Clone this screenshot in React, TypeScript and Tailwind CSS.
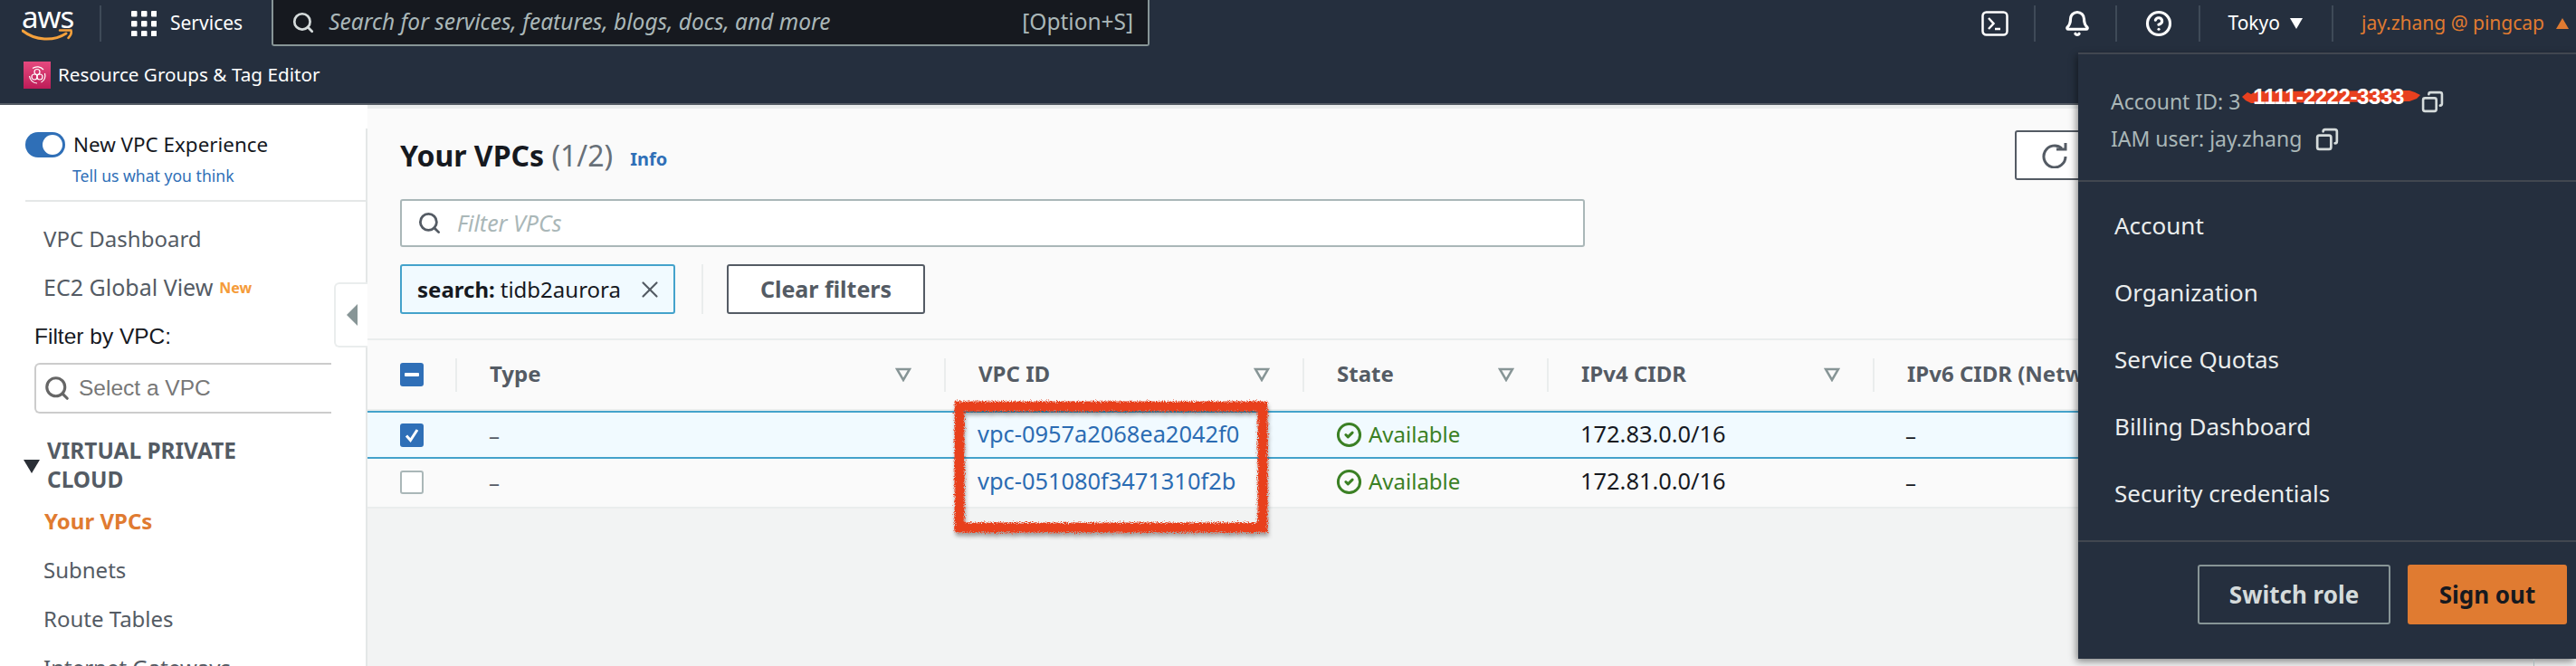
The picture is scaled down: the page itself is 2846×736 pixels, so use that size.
import { Bell, CircleCheck, CircleHelp, Copy, Search, X } from "lucide-react";

const columns = [
  { label: "Type", cell: "w-[540px]", caret: true },
  { label: "VPC ID", cell: "w-[396px]", caret: true },
  { label: "State", cell: "w-[270px]", caret: true },
  { label: "IPv4 CIDR", cell: "w-[360px]", caret: true },
  { label: "IPv6 CIDR (Network border group)", cell: "w-[400px]", caret: false },
];

const rows = [
  { id: "vpc-0957a2068ea2042f0", cidr: "172.83.0.0/16", selected: true },
  { id: "vpc-051080f3471310f2b", cidr: "172.81.0.0/16", selected: false },
];

const menuItems = ["Account", "Organization", "Service Quotas", "Billing Dashboard", "Security credentials"];

function NavSep() {
  return <div className="h-[40px] w-[2px] bg-[#3f4a58]" />;
}

function AwsLogo() {
  return (
    <div className="flex w-[56px] flex-col">
      <span className="h-[28px] text-[33px] leading-[28px] tracking-[-1px] text-white">aws</span>
      <svg width="57" height="14" viewBox="0 0 57 14" fill="none" className="-mt-[1px]">
        <path d="M1 2c14 11 34 12 48 3" stroke="#f5a13c" strokeWidth="3" strokeLinecap="round" />
        <path d="M42 1.5h12.5c.8 3-.8 6.500-3 8.500" stroke="#f5a13c" strokeWidth="2.500" strokeLinecap="round" />
      </svg>
    </div>
  );
}

function GridIcon() {
  return (
    <svg width="28" height="28" viewBox="0 0 28 28" fill="white">
      {[0, 11, 22].map((y) =>
        [0, 11, 22].map((x) => <rect key={`${x}-${y}`} x={x} y={y} width="6.500" height="6.500" rx="1" />)
      )}
    </svg>
  );
}

function TerminalIcon() {
  return (
    <svg width="30" height="28" viewBox="0 0 30 28" fill="none" stroke="white" strokeWidth="2.500">
      <rect x="1.500" y="1.500" width="27" height="25" rx="4" />
      <path d="M8 8l5.500 6L8 20M15 20h6" />
    </svg>
  );
}

function ResourceGroupsIcon() {
  return (
    <div className="flex h-[30px] w-[30px] items-center justify-center bg-gradient-to-t from-[#bd1a58] to-[#e5497f]">
      <svg width="22" height="22" viewBox="0 0 22 22" fill="none" stroke="white" strokeWidth="1.200">
        <circle cx="11" cy="7.500" r="3" />
        <circle cx="8" cy="13" r="3" />
        <circle cx="14" cy="13" r="3" />
        <path d="M6 3.500A9 9 0 0 1 18 5M19.500 9a9 9 0 0 1-4 10M11 20a9 9 0 0 1-8.500-8" />
      </svg>
    </div>
  );
}

function FilterCaret() {
  return (
    <svg width="18" height="16" viewBox="0 0 18 16" fill="none" stroke="#879596" strokeWidth="2.500" className="ml-auto mr-[36px]">
      <path d="M2 2h14L9 14z" />
    </svg>
  );
}

function Checkbox({ state }: { state: "mixed" | "checked" | "empty" }) {
  if (state === "empty") {
    return <div className="h-[26px] w-[26px] rounded-[3px] border-2 border-[#aab7b8] bg-white" />;
  }
  return (
    <div className="flex h-[26px] w-[26px] items-center justify-center rounded-[3px] bg-[#2f6fb7]">
      {state === "mixed" ? (
        <div className="h-[4px] w-[16px] rounded-[1px] bg-white" />
      ) : (
        <svg width="18" height="18" viewBox="0 0 18 18" fill="none" stroke="white" strokeWidth="3">
          <path d="M3 9.500l4.500 5L15 3" />
        </svg>
      )}
    </div>
  );
}

function Sidebar() {
  return (
    <aside className="relative w-[406px] shrink-0 bg-white pt-[26px]">
      <div className="h-full border-r-2 border-[#e4e7e7] pl-[28px]">
        <div className="flex h-[36px] items-center">
          <div className="flex h-[28px] w-[44px] items-center justify-end rounded-full bg-[#2f6fb7] pr-[3px]">
            <div className="h-[22px] w-[22px] rounded-full bg-white" />
          </div>
          <span className="ml-[9px] text-[22.4px] text-[#16191f]">New VPC Experience</span>
        </div>
        <div className="flex h-[32px] items-center pl-[52px] text-[17.6px] text-[#2f6fb7]">Tell us what you think</div>
        <div className="mt-[11px] h-[2px] bg-[#e4e7e7]" />
        <div className="pt-[14px] text-[24px] text-[#545b64]">
          <div className="flex h-[54px] items-center pl-[20px]">VPC Dashboard</div>
          <div className="flex h-[54px] items-center pl-[20px] text-[25px]">
            EC2 Global View
            <span className="ml-[7px] text-[16px] font-bold text-[#f59b39]">New</span>
          </div>
        </div>
        <div className="flex h-[54px] items-center pl-[10px] font-['Liberation_Sans',sans-serif] text-[24.5px] text-[#16191f]">
          Filter by VPC:
        </div>
        <div className="ml-[10px] mt-[2px] flex h-[56px] w-[328px] items-center rounded-l-[6px] border-2 border-r-0 border-[#cccccc] pl-[8px] font-['Liberation_Sans',sans-serif] text-[24.5px] text-[#777777]">
          <Search size={30} strokeWidth={2.500} className="text-[#666666]" />
          <span className="ml-[9px]">Select a VPC</span>
        </div>
        <div className="relative mt-[25px] pl-[24px] text-[24.4px] font-bold leading-[32px] text-[#545b64]">
          <svg width="18" height="15" viewBox="0 0 18 15" className="absolute -left-[2px] top-[26px]">
            <path d="M0 0h18L9 15z" fill="#2a2f36" />
          </svg>
          VIRTUAL PRIVATE
          <br />
          CLOUD
        </div>
        <div className="pt-[3px] text-[24px] text-[#545b64]">
          <div className="flex h-[54px] items-center pl-[21px] font-bold text-[#e07b31]">Your VPCs</div>
          <div className="flex h-[54px] items-center pl-[20px]">Subnets</div>
          <div className="flex h-[54px] items-center pl-[20px]">Route Tables</div>
          <div className="flex h-[54px] items-center pl-[20px]">Internet Gateways</div>
        </div>
      </div>
      {/* collapse handle sits over the sidebar edge */}
      <div className="absolute left-[369px] top-[196px] flex h-[72px] w-[37px] items-center justify-center rounded-l-[6px] border-2 border-r-0 border-[#eaeded] bg-white">
        <svg width="12" height="24" viewBox="0 0 12 24">
          <path d="M12 0v24L0 12z" fill="#879596" />
        </svg>
      </div>
    </aside>
  );
}

function VpcTable() {
  return (
    <div className="mt-[27px]">
      <div className="flex h-[80px] items-center border-y-2 border-[#eaeded] text-[24px] font-bold text-[#545b64]">
        <div className="flex h-[37px] w-[99px] items-center border-r-2 border-[#eaeded] pl-[36px]">
          <Checkbox state="mixed" />
        </div>
        {columns.map((col) => (
          <div
            key={col.label}
            className={`flex h-[37px] shrink-0 items-center whitespace-nowrap pl-[36px] ${col.cell} ${col.caret ? "border-r-2 border-[#eaeded]" : ""}`}
          >
            <span className="-mt-[3px]">{col.label}</span>
            {col.caret && <FilterCaret />}
          </div>
        ))}
      </div>
      {rows.map((row) => (
        <div
          key={row.id}
          className={`flex items-center text-[24px] ${row.selected ? "h-[53px] border-y-2 border-[#44a2cb] bg-[#f1faff]" : "h-[55px] border-b-2 border-[#eaeded] bg-[#fafafa] pb-[2px]"}`}
        >
          <div className="w-[99px] pl-[36px]">
            <Checkbox state={row.selected ? "checked" : "empty"} />
          </div>
          <div className="w-[540px] pl-[35px] text-[#545b64]">–</div>
          <div className="w-[396px] pb-[2px] pl-[35px] text-[25.4px] text-[#2b6cb3]">{row.id}</div>
          <div className="flex w-[270px] items-center pl-[35px] text-[#3b8024]">
            <CircleCheck size={29} strokeWidth={2.500} className="mr-[7px]" />
            <span className="pb-[2px]">Available</span>
          </div>
          <div className="w-[360px] pb-[2px] pl-[35px] text-[25.4px] text-[#16191f]">{row.cidr}</div>
          <div className="pl-[34px] text-[#16191f]">–</div>
        </div>
      ))}
    </div>
  );
}

function AccountMenu() {
  return (
    <div className="absolute bottom-[8px] right-0 top-[58px] w-[550px] border-t-2 border-[#414750] bg-[#252f3e] shadow-[-2px_3px_8px_rgba(0,0,0,0.45)]">
      <div className="h-[141px] border-b-2 border-[#414750] pl-[36px] pt-[36px] text-[23px] text-[#aab7b8]">
        <div className="flex h-[33px] items-center">
          Account ID: 3
          <div className="relative ml-[2px] h-[33px] w-[197px]">
            <svg width="197" height="16" viewBox="0 0 197 16" className="absolute left-0 top-[3px]">
              <path d="M0 8l6-5 4 2 5-3 170-1 6 2 6 3-4 4-8 3-175 2-6-3-2-2z" fill="#e8401f" />
            </svg>
            <span className="absolute left-[12px] top-[-1px] font-['Liberation_Sans',sans-serif] text-[24px] font-bold leading-[24px] tracking-[-0.4px] text-white">
              1111-2222-3333
            </span>
          </div>
          <Copy size={25} strokeWidth={2.500} className="ml-[1px] -scale-x-100 text-[#d5dbdb]" />
        </div>
        <div className="mt-[8px] flex h-[33px] items-center">
          IAM user: jay.zhang
          <Copy size={26} strokeWidth={2.500} className="ml-[15px] -scale-x-100 text-[#d5dbdb]" />
        </div>
      </div>
      <div className="h-[398px] border-b-2 border-[#414750] pl-[40px] pt-[11px] text-[26px] text-[#eaeded]">
        {menuItems.map((item) => (
          <div key={item} className="flex h-[74px] items-center">
            {item}
          </div>
        ))}
      </div>
      <div className="flex justify-end gap-[19px] pr-[10px] pt-[25px] text-[26px] font-bold">
        <button className="h-[66px] w-[213px] rounded-[3px] border-2 border-[#879596] text-[#d5dbdb]">Switch role</button>
        <button className="h-[66px] w-[176px] rounded-[3px] bg-[#e07b31] text-[#16191f]">Sign out</button>
      </div>
    </div>
  );
}

export default function App() {
  return (
    <div className="relative flex h-[736px] w-[2846px] flex-col overflow-hidden bg-[#f2f3f3] font-['Noto_Sans',sans-serif]">
      <header className="h-[116px] shrink-0 border-b-[2px] border-[#545b64] bg-[#252f3e]">
        <div className="flex h-[51px] items-center">
          <div className="ml-[24px] w-[56px]">
            <AwsLogo />
          </div>
          <div className="ml-[30px]">
            <NavSep />
          </div>
          <div className="ml-[33px]">
            <GridIcon />
          </div>
          <span className="ml-[15px] text-[21px] text-white">Services</span>
          <div className="ml-[32px] flex h-[51px] w-[970px] items-center rounded-b-[3px] border-x-2 border-b-2 border-[#879596] bg-[#16191f] pl-[20px] pr-[16px] text-[24.5px] text-[#aab7b8]">
            <Search size={26} strokeWidth={2.500} className="text-[#d5dbdb]" />
            <span className="ml-[15px] italic">Search for services, features, blogs, docs, and more</span>
            <span className="ml-auto">[Option+S]</span>
          </div>
          <div className="ml-auto flex items-center text-[21px]">
            <TerminalIcon />
            <div className="ml-[28px]">
              <NavSep />
            </div>
            <Bell size={30} strokeWidth={2.500} className="ml-[31px] text-white" />
            <div className="ml-[27px]">
              <NavSep />
            </div>
            <CircleHelp size={30} strokeWidth={2.500} className="ml-[31px] text-white" />
            <div className="ml-[29px]">
              <NavSep />
            </div>
            <span className="ml-[30px] text-white">Tokyo</span>
            <svg width="14" height="12" viewBox="0 0 14 12" className="ml-[11px]">
              <path d="M0 0h14L7 12z" fill="white" />
            </svg>
            <div className="ml-[32px]">
              <NavSep />
            </div>
            <span className="ml-[31px] text-[#e07b31]">jay.zhang @ pingcap</span>
            <svg width="14" height="12" viewBox="0 0 14 12" className="ml-[13px] mr-[8px]">
              <path d="M7 0l7 12H0z" fill="#e07b31" />
            </svg>
          </div>
        </div>
        <div className="flex h-[63px] items-center pl-[26px] text-[20.7px] text-white">
          <ResourceGroupsIcon />
          <span className="ml-[8px]">Resource Groups &amp; Tag Editor</span>
        </div>
      </header>

      <div className="flex min-h-0 flex-1">
        <Sidebar />
        <main className="min-w-0 flex-1">
          <div className="h-[444px] border-t-4 border-[#eaeded] bg-[#fafafa]">
            <div className="px-[36px] pt-[24px]">
              <div className="flex h-[55px] items-center">
                <h1 className="text-[32px] font-bold text-[#16191f]">
                  Your VPCs <span className="font-normal text-[#687078]">(1/2)</span>
                </h1>
                <span className="ml-[19px] mt-[8px] text-[20px] font-bold text-[#2f6fb7]">Info</span>
                <button className="ml-auto mr-[474px] flex h-[55px] w-[110px] items-center rounded-[3px] border-2 border-[#545b64] bg-white pl-[27px]">
                  <svg width="30" height="28" viewBox="0 0 30 28" fill="none" stroke="#545b64" strokeWidth="3">
                    <path d="M23 6A12 12 0 1 0 27 15" />
                    <path d="M17 7h10V0" />
                  </svg>
                </button>
              </div>
              <div className="mt-[21px] flex h-[53px] w-[1309px] items-center rounded-[3px] border-2 border-[#aab7b8] bg-white pl-[17px]">
                <Search size={27} strokeWidth={2.500} className="text-[#545b64]" />
                <span className="ml-[17px] text-[25px] italic text-[#aab7b8]">Filter VPCs</span>
              </div>
              <div className="mt-[19px] flex h-[55px] items-stretch">
                <div className="flex w-[304px] items-center rounded-[3px] border-2 border-[#44a2cb] bg-[#f1faff] pl-[17px] text-[24px] text-[#16191f]">
                  <b>search:</b>
                  <span className="ml-[6px]">tidb2aurora</span>
                  <X size={30} strokeWidth={1.750} className="ml-auto mr-[11px] text-[#545b64]" />
                </div>
                <div className="ml-[29px] w-[2px] bg-[#eaeded]" />
                <button className="ml-[26px] w-[219px] rounded-[3px] border-2 border-[#545b64] bg-white text-[25px] font-bold text-[#545b64]">
                  Clear filters
                </button>
              </div>
            </div>
            <VpcTable />
          </div>
        </main>
      </div>

      {/* red annotation drawn over the screenshot */}
      <svg width="380" height="176" viewBox="0 0 380 176" className="absolute left-[1044px] top-[433px]" fill="none">
        <defs>
          <filter id="rough" x="-5%" y="-10%" width="110%" height="120%">
            <feTurbulence type="fractalNoise" baseFrequency="0.9" numOctaves="2" seed="4" />
            <feDisplacementMap in="SourceGraphic" scale="7" />
            <feDropShadow dx="1" dy="4" stdDeviation="2" floodColor="#000000" floodOpacity="0.35" />
          </filter>
        </defs>
        <rect x="16" y="16" width="335" height="134" stroke="#e8401f" strokeWidth="11" filter="url(#rough)" />
      </svg>

      <AccountMenu />
      <div className="absolute bottom-0 left-[2799px] h-[8px] w-[1px] bg-[#aab7b8]" />
    </div>
  );
}
